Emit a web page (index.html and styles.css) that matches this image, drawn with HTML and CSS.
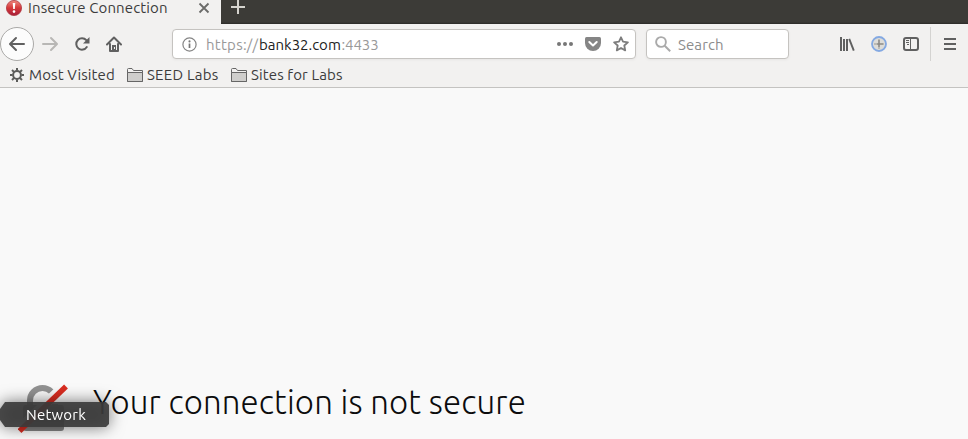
FILE: index.html
```html
<!DOCTYPE html>
<html lang="en">
<head>
<meta charset="utf-8">
<title>Insecure Connection</title>
<link rel="stylesheet" href="styles.css">
</head>
<body>
<header class="chrome">
  <div class="tabs">
    <div class="tab">
      <svg class="alert" width="16" height="16" viewBox="0 0 16 16"><defs><linearGradient id="red" x1="0" y1="0" x2="0" y2="1"><stop offset="0" stop-color="#ee8a80"/><stop offset=".5" stop-color="#d6383a"/><stop offset="1" stop-color="#a51e3a"/></linearGradient></defs><circle cx="8" cy="8" r="7.600" fill="url(#red)" stroke="#b03a42" stroke-width=".8"/><path d="M6.700 3h2.600l-.5 6H7.200z" fill="#fff"/><circle cx="8" cy="11.600" r="1.300" fill="#fff"/></svg>
      <span class="tab-title">Insecure Connection</span>
      <svg class="close" width="12" height="12" viewBox="0 0 12 12"><path d="M1.500 1.500l9 9m0-9l-9 9" stroke="#6b6b69" stroke-width="1.800"/></svg>
    </div>
    <svg class="plus" width="16" height="16" viewBox="0 0 16 16"><path d="M8 1v14M1 8h14" stroke="#d5d3ce" stroke-width="2"/></svg>
  </div>
  <nav class="toolbar">
    <div class="back"><svg width="18" height="16" viewBox="0 0 18 16"><path d="M8 2L2 8l6 6M2.500 8H16" fill="none" stroke="#606060" stroke-width="2" stroke-linecap="round" stroke-linejoin="round"/></svg></div>
    <svg class="forward" width="18" height="16" viewBox="0 0 18 16"><path d="M10 2l6 6-6 6M15.500 8H2" fill="none" stroke="#b8b7b5" stroke-width="2" stroke-linecap="round" stroke-linejoin="round"/></svg>
    <svg class="reload" width="16" height="16" viewBox="0 0 16 16"><path d="M12.300 4.200A5.700 5.700 0 1 0 12.800 11" fill="none" stroke="#606060" stroke-width="2" stroke-linecap="round"/><path d="M15.500 1v6.500H9z" fill="#606060"/></svg>
    <svg class="home" width="16" height="16" viewBox="0 0 16 16"><path d="M1 8.500L8 1.500l7 7M4 8v7h8V8" fill="none" stroke="#606060" stroke-width="2" stroke-linecap="round" stroke-linejoin="round"/><path d="M6 9h4v6H6z" fill="#606060"/><path d="M8 11h1v2H8z" fill="#f2f1f0"/></svg>
    <div class="field url">
      <svg width="15" height="15" viewBox="0 0 15 15"><circle cx="7.500" cy="7.500" r="6.600" fill="none" stroke="#858585" stroke-width="1.200"/><path d="M7.500 6.500V11" stroke="#777" stroke-width="1.700"/><circle cx="7.500" cy="4.400" r="1.050" fill="#777"/></svg>
      <span class="address"><span class="scheme">https://</span><span class="host">bank32.com</span><span class="port">:4433</span></span>
      <svg class="dots" width="16" height="16" viewBox="0 0 16 16" fill="#777"><circle cx="2" cy="8" r="2"/><circle cx="8" cy="8" r="2"/><circle cx="14" cy="8" r="2"/></svg>
      <svg class="pocket" width="16" height="14" viewBox="0 0 16 14"><path d="M1.500 0h13Q16 0 16 1.500V6a8 8 0 0 1-16 0V1.500Q0 0 1.500 0z" fill="#858585"/><path d="M4.300 5L8 8.500 11.700 5" fill="none" stroke="#fff" stroke-width="2" stroke-linecap="round" stroke-linejoin="round"/></svg>
      <svg class="star" width="16" height="16" viewBox="0 0 16 16"><path d="M8 1.300l2 4.400 4.900.6-3.600 3.200.9 4.900L8 12l-4.200 2.400.9-4.900L1.100 6.300 6 5.700z" fill="none" stroke="#7d7d7d" stroke-width="1.800" stroke-linejoin="round"/></svg>
    </div>
    <div class="field search">
      <svg width="16" height="16" viewBox="0 0 16 16"><circle cx="6" cy="6" r="4.900" fill="none" stroke="#aaa" stroke-width="1.900"/><path d="M9.700 9.700l5.500 5.500" stroke="#aaa" stroke-width="2"/></svg>
      <span class="search-label">Search</span>
    </div>
    <svg class="library" width="16" height="16" viewBox="0 0 16 16"><path d="M2 1v14M5 3v12M8 3v12" stroke="#606060" stroke-width="2"/><path d="M10.200 2.800L14.800 14.700" stroke="#606060" stroke-width="1.900"/></svg>
    <svg class="compass" width="16" height="16" viewBox="0 0 16 16"><circle cx="8" cy="8" r="7" fill="#dddcd8" stroke="#84a9e2" stroke-width="1.800"/><path d="M8 3v10M3 8h10" stroke="#b0afab" stroke-width="1.400"/><path d="M8 4v7M6 8h6" fill="none" stroke="#85837f" stroke-width="1.200"/></svg>
    <svg class="sidebar" width="16" height="14" viewBox="0 0 16 14"><rect x="1" y="1" width="14" height="12" rx="2" fill="none" stroke="#606060" stroke-width="2"/><path d="M7.500 1v12" stroke="#606060"/><path d="M3 3.500h3M3 5.500h3M4 7.500h2" stroke="#606060"/></svg>
    <div class="separator"></div>
    <svg class="menu" width="12" height="12" viewBox="0 0 12 12"><path d="M0 1h12M0 6h12M0 11h12" stroke="#606060" stroke-width="2"/></svg>
  </nav>
  <div class="bookmarks">
    <svg class="gear" width="14" height="14" viewBox="0 0 14 14"><circle cx="7" cy="7" r="3.900" fill="none" stroke="#5b5b59" stroke-width="2"/><path d="M7 0v2.500M7 11.500V14M0 7h2.500M11.500 7H14M2 2l1.900 1.900M10.100 10.100L12 12M12 2l-1.900 1.900M3.900 10.100L2 12" stroke="#5b5b59" stroke-width="2"/></svg>
    <span class="mark visited">Most Visited</span>
    <svg class="folder" width="16" height="14" viewBox="0 0 16 14"><path d="M.5 13.500V1.500Q.5.500 1.500.500H5l1.500 2h9v11z" fill="#f2f1f0" stroke="#666"/><path d="M.5 4.500h15v9H.5z" fill="#cfcecc" stroke="#666"/></svg>
    <span class="mark seed">SEED Labs</span>
    <svg class="folder" width="16" height="14" viewBox="0 0 16 14"><path d="M.5 13.500V1.500Q.5.500 1.500.500H5l1.500 2h9v11z" fill="#f2f1f0" stroke="#666"/><path d="M.5 4.500h15v9H.5z" fill="#cfcecc" stroke="#666"/></svg>
    <span class="mark sites">Sites for Labs</span>
  </div>
</header>
<main class="page">
  <svg class="lock" width="50" height="50" viewBox="0 0 50 50"><path d="M12 25V17.500a12.500 12.500 0 0 1 25 0V26" fill="none" stroke="#929292" stroke-width="6"/><rect x="5" y="22" width="41" height="26" rx="3" fill="#858585"/><path d="M0 46.500L48 .500" stroke="#f9f9f9" stroke-width="9"/><path d="M40 14v12" stroke="#f9f9f9" stroke-width="12" transform="translate(0 -5)"/><path d="M1.500 48L48 3.500" stroke="#d92d21" stroke-width="5.500"/></svg>
  <h1>Your connection is not secure</h1>
  <div class="tooltip"><span>Network</span></div>
</main>
</body>
</html>
```

FILE: styles.css
```css
* { box-sizing: border-box; }
body {
  margin: 0;
  height: 439px;
  overflow: hidden;
  background: #f9f9f9;
  font: 15px/20px Ubuntu, "Noto Sans", sans-serif;
  color: #3c3c3c;
}
svg { display: block; flex: none; }
span { white-space: nowrap; }
.chrome { height: 88px; background: #f2f1f0; border-bottom: 1px solid #c4c3c1; }
.tabs {
  display: flex;
  height: 24px;
  background: linear-gradient(#3c3b37 22px, #2b2a27 24px);
}
.tab { display: flex; width: 221px; height: 24px; padding-left: 6px; background: #f2f1f0; }
.tab-title { width: 164px; margin: -2px 0 0 6px; letter-spacing: .12px; }
.close { margin: 2px 0 0 6px; }
.plus { margin: -1px 0 0 9px; }
.toolbar { display: flex; align-items: center; height: 40px; }
.back {
  display: flex;
  align-items: center;
  justify-content: center;
  width: 34px;
  height: 34px;
  border: 1px solid #aaa9a7;
  border-radius: 50%;
  background: #fcfcfc;
}
.forward { margin-left: 7px; }
.reload { margin-left: 15px; }
.home { margin-left: 16px; }
.field {
  display: flex;
  align-items: center;
  height: 30px;
  border: 1px solid #c5c3c0;
  border-radius: 4px;
  background: #fff;
  box-shadow: 0 1px 3px #0000000d;
}
.url { width: 464px; margin-left: 50px; padding-left: 9px; }
.address { display: flex; width: 351px; margin: 1px 0 0 9px; }
.scheme, .port { color: #999; }
.scheme { width: 53px; letter-spacing: .25px; }
.host { width: 82.500px; color: #222; }
.port { letter-spacing: -.1px; }
.pocket { margin-left: 12px; }
.star { margin-left: 12px; }
.search { width: 143px; margin-left: 10px; padding-left: 8px; }
.search-label { margin: 1px 0 0 7px; color: #8c8c8c; letter-spacing: .1px; }
.library { margin-left: 50px; }
.compass { margin-left: 16px; }
.sidebar { margin-left: 16px; }
.separator { width: 1px; height: 34px; margin-left: 11px; background: #d4d3d1; }
.menu { margin-left: 13px; }
.bookmarks { display: flex; align-items: center; height: 22px; padding-left: 10px; }
.mark { letter-spacing: .12px; }
.visited { width: 98px; margin-left: 5px; }
.seed { width: 84px; margin-left: 4px; letter-spacing: .25px; }
.sites { margin-left: 4px; }
.page { position: relative; display: flex; height: 351px; padding: 295px 0 0 18px; }
h1 {
  margin: -2px 0 0 25px;
  font: 300 33px/42px Ubuntu, "Open Sans", sans-serif;
  letter-spacing: .13px;
  white-space: nowrap;
  color: #0c0c0d;
}
.tooltip {
  position: absolute;
  left: 0;
  top: 314px;
  width: 109px;
  height: 25px;
  filter: drop-shadow(0 0 8px #0009);
}
.tooltip span {
  display: block;
  height: 25px;
  padding-left: 26px;
  background: #3b3b3bea;
  clip-path: polygon(0 7px, 5px 0, 106px 0, 109px 3px, 109px 22px, 106px 25px, 5px 25px, 0 18px);
  color: #fff;
  letter-spacing: .2px;
  line-height: 25px;
}
```
